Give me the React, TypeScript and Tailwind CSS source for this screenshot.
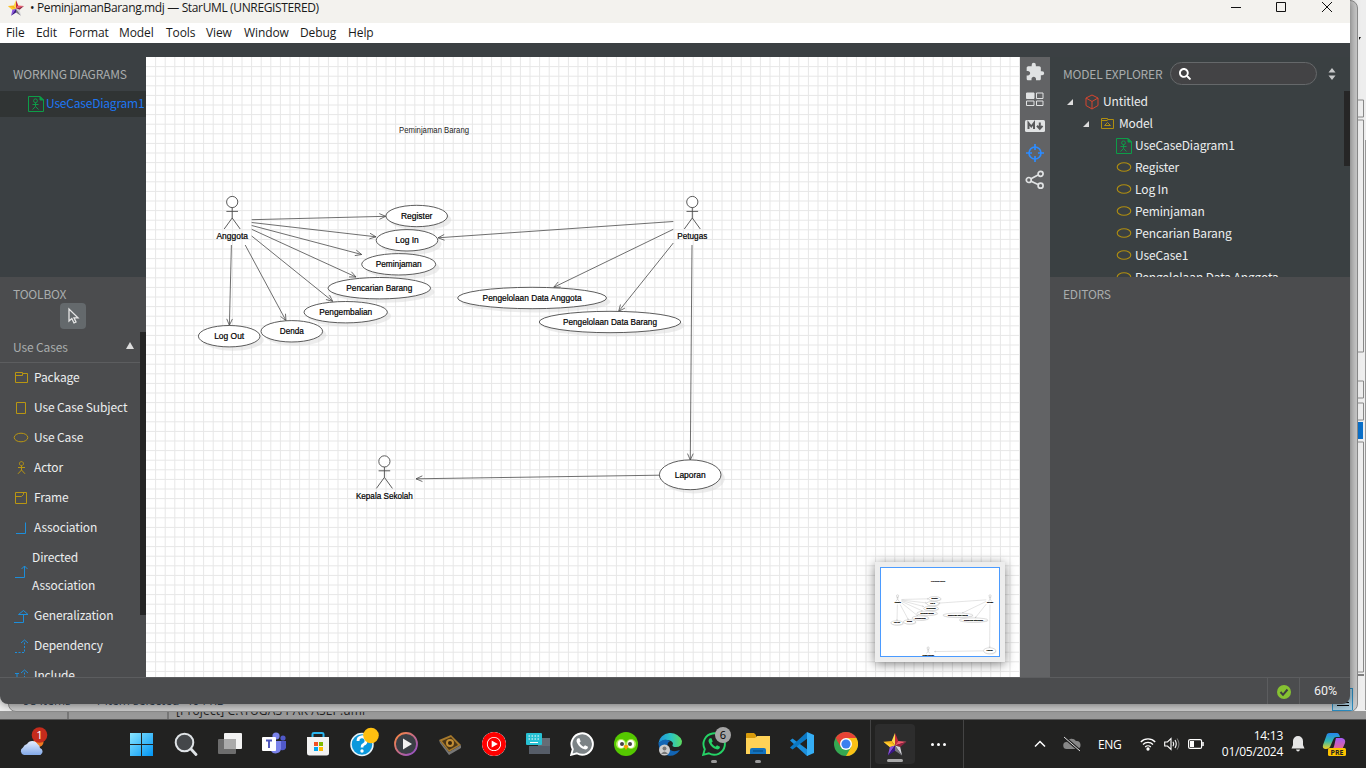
import React from 'react';
import { FaSearch } from 'react-icons/fa';
import { MdExtension } from 'react-icons/md';
import { SiYoutubemusic } from 'react-icons/si';

const SANS = "font-['Noto_Sans_CJK_SC',sans-serif]";
const UI = "font-['Open_Sans','Noto_Sans',sans-serif]";

const ellipses: [string, number, number, number, number, number][] = [
  ['Register', 416.7, 216, 30.8, 10.7, 31.5],
  ['Log In', 407, 240.3, 30.8, 10.7, 23.5],
  ['Peminjaman', 398.7, 264.3, 37, 10.7, 46],
  ['Pencarian Barang', 379.3, 288.2, 51.3, 10.7, 66],
  ['Pengembalian', 345.7, 312.2, 41.7, 10.7, 53],
  ['Denda', 291.8, 331.3, 30.8, 10.7, 24],
  ['Log Out', 229.2, 336.2, 30.8, 10.7, 30],
  ['Pengelolaan Data Anggota', 532.1, 298, 74.5, 10.7, 99],
  ['Pengelolaan Data Barang', 610, 322, 70.8, 10.7, 94],
  ['Laporan', 690.2, 474.8, 30.8, 14.9, 31],
];

const edges = [
  [251.7, 219.7, 385.7, 216.3],
  [251.7, 222.5, 376, 236.8],
  [251.7, 225.5, 361.7, 254.5],
  [251.7, 229.3, 356, 277],
  [251.7, 236, 332.7, 301.3],
  [245.2, 245, 286, 320.7],
  [231.4, 245, 229.4, 325.3],
  [673.3, 221.5, 438, 237.8],
  [673.3, 229.3, 553.7, 287.3],
  [673.3, 243, 618.7, 311.3],
  [692, 245, 690.3, 460],
  [659.4, 475.2, 416, 478.8],
];

const actors: [string, number, number, number][] = [
  ['Anggota', 232.2, 202, 31.5],
  ['Petugas', 692.3, 202, 30],
  ['Kepala Sekolah', 384.4, 461.4, 57],
];

function Edge({ p }: { p: number[] }) {
  const [x1, y1, x2, y2] = p;
  const a = Math.atan2(y2 - y1, x2 - x1);
  const w = (d: number) => `${x2 - 7 * Math.cos(a + d)} ${y2 - 7 * Math.sin(a + d)}`;
  return <path d={`M${x1} ${y1}L${x2} ${y2}M${w(0.42)}L${x2} ${y2}L${w(-0.42)}`} />;
}

function Diagram({ mini = false }: { mini?: boolean }) {
  return (
    <g fontFamily="'Liberation Sans', sans-serif" fontSize="8.3" textAnchor="middle">
      <text x="434" y="133" textLength="70" lengthAdjust="spacingAndGlyphs" fill="#222" stroke={mini ? '#333' : 'none'} strokeWidth={mini ? 0.8 : 0}>
        Peminjaman Barang
      </text>
      <g fill="none" stroke={mini ? '#aaa' : '#4a4a4a'} strokeWidth={mini ? 1.6 : 0.8}>
        {edges.map((p, i) => <Edge key={i} p={p} />)}
      </g>
      {ellipses.map(([n, cx, cy, rx, ry, w]) => (
        <g key={n}>
          <ellipse cx={cx + 3.8} cy={cy + 3.8} rx={rx} ry={ry} fill="#d8d8d8" fillOpacity="0.45" />
          <ellipse cx={cx} cy={cy} rx={rx} ry={ry} fill="#fff" stroke={mini ? '#aaa' : '#4a4a4a'} strokeWidth={mini ? 2 : 0.9} />
          <text x={cx} y={cy + 2.9} textLength={w} lengthAdjust="spacingAndGlyphs" fill="#000" stroke="#000" strokeWidth={mini ? 0.8 : 0.2}>{n}</text>
        </g>
      ))}
      {actors.map(([n, x, y, w]) => (
        <g key={n}>
          <circle cx={x} cy={y} r="5.6" fill="#fff" stroke={mini ? '#aaa' : '#4a4a4a'} strokeWidth={mini ? 2 : 0.9} />
          <path d={`M${x} ${y + 5.6}V${y + 16}M${x - 5.8} ${y + 9.4}H${x + 5.8}M${x - 8} ${y + 27}L${x} ${y + 16}L${x + 8} ${y + 27}`} fill="none" stroke={mini ? '#aaa' : '#4a4a4a'} strokeWidth={mini ? 2 : 0.9} />
          <text x={x} y={y + 37.3} textLength={w} lengthAdjust="spacingAndGlyphs" fill="#000" stroke="#000" strokeWidth={mini ? 0.8 : 0.2}>{n}</text>
        </g>
      ))}
    </g>
  );
}

function GridLines() {
  let d = '';
  for (let i = 1; i <= 91; i++) d += `M${146 + i * 9.6} 57V677`;
  for (let i = 1; i <= 64; i++) d += `M146 ${57 + i * 9.6}H1020`;
  return <path d={d} stroke="#e7e7e7" strokeWidth="1" fill="none" />;
}

function StarIcon({ className }: { className: string }) {
  return (
    <svg viewBox="0 0 24 24" className={className}>
      <path d="M12 0L8.6 8.4L12 13Z" fill="#ffd84a" />
      <path d="M12 0L15.4 8.4L12 13Z" fill="#c32a3c" />
      <path d="M0 9L8.6 8.4L12 13L6.6 14.6Z" fill="#f9b418" />
      <path d="M0 9L6.6 14.6L12 13Z" fill="#ffcf33" />
      <path d="M24 9L15.4 8.4L12 13Z" fill="#f0566c" />
      <path d="M24 9L17.4 14.6L12 13Z" fill="#8e2440" />
      <path d="M4.6 23.5L6.6 14.6L12 13Z" fill="#8a4fe0" />
      <path d="M4.6 23.5L12 18.6V13Z" fill="#3a1688" />
      <path d="M19.4 23.5L17.4 14.6L12 13Z" fill="#d5d5dc" />
      <path d="M19.4 23.5L12 18.6V13Z" fill="#77767f" />
    </svg>
  );
}

function UseCaseDiagramIcon() {
  return (
    <svg viewBox="0 0 16 16" className="h-4 w-4 shrink-0" fill="none" stroke="#0d9d48">
      <path d="M.5 .5H12L15.5 4V15.5H.5Z" />
      <path d="M12 .5V4H15.5Z" fill="#0d9d48" />
      <circle cx="7.5" cy="4.8" r="1.9" />
      <path d="M7.5 6.7V10.5M4.5 8.5H10.5M4.5 13.5L7.5 10.5L10.5 13.5" />
    </svg>
  );
}

function OvalIcon() {
  return (
    <svg viewBox="0 0 16 16" className="h-4 w-4 shrink-0 overflow-visible">
      <ellipse cx="8" cy="8" rx="6.8" ry="4.3" fill="none" stroke="#b08e10" strokeWidth="1.1" />
    </svg>
  );
}

const toolPaths: Record<string, React.ReactNode> = {
  Package: <path d="M1.5 3.5V12.5H13.5V3.5H8.5V2.500H1.5V5.500H8.500V3.500" />,
  'Use Case Subject': <path d="M2.5 2.5H11.5V13.5H2.5Z" />,
  'Use Case': <ellipse cx="7" cy="7.500" rx="6.8" ry="4.3" />,
  Actor: <path d="M7.500 1.6A2 2 0 1 1 7.4 1.6ZM7.500 5.6V10M4 7.5H11M4 13.8L7.500 10L11 13.8" />,
  Frame: <path d="M1.5 2.5H12.5V13.5H1.5ZM1.5 6.5H7.500L9.5 4.5V2.5" />,
  Association: <path d="M2 13.5H11.5V2.5" />,
  'Directed Association': <path d="M1 13.5H10.5V2M7.5 5L10.5 2L13.5 5" />,
  Generalization: <path d="M0 14.5H9.5V6.5M4.5 6.5H14L9.5 2.5Z" />,
  Dependency: <><path strokeDasharray="2 1.5" d="M1 14.5H10.5V3" /><path d="M7 5L10.500 2L14 5" /></>,
  Include: <><path strokeDasharray="2 1.5" d="M1 14.5H10.5V3" /><path d="M1 5.5H5M3 5.5V10M7 5L10.500 2L14 5" /></>,
};

function ToolRow({ name }: { name: string }) {
  const directed = name === 'Directed Association';
  const blue = ['Association', 'Directed Association', 'Generalization', 'Dependency', 'Include'].includes(name);
  return (
    <div className={`flex shrink-0 items-center pl-3.5 ${directed ? 'h-[58px]' : 'h-[30px]'}`}>
      <svg viewBox="0 0 16 16" className="h-4 w-4 shrink-0 overflow-visible" fill="none" stroke={blue ? '#1c8edb' : '#b99612'}>
        {toolPaths[name]}
      </svg>
      <span className={directed ? '-mt-0.5 ml-0.5 w-20 leading-7' : '-mt-0.5 ml-1 whitespace-nowrap leading-7'}>{name}</span>
    </div>
  );
}

function Sidebar() {
  return (
    <div className={`flex w-[146px] flex-col overflow-hidden text-[12px] tracking-[-0.12px] text-[#eceeef] ${SANS}`}>
      <div className="flex h-[220px] shrink-0 flex-col bg-[#3b4043] pt-1.5">
        <div className="h-7 whitespace-nowrap pl-[13px] tracking-[-0.2px] leading-[22px] text-[#a9acad]">WORKING DIAGRAMS</div>
        <div className="flex h-[26px] items-center bg-[#303434] pl-7 text-[#1d76f2]">
          <UseCaseDiagramIcon />
          <span className="-mt-0.5 ml-0.5 tracking-[-0.2px]">UseCaseDiagram1</span>
        </div>
      </div>
      <div className="flex min-h-0 flex-1 flex-col bg-[#4b4c4e]">
        <div className="h-[26px] shrink-0 pl-[13px] pt-1.5 tracking-[-0.2px] leading-[22px] text-[#a9acad]">TOOLBOX</div>
        <div className="flex h-[29px] shrink-0 justify-center">
          <div className="flex h-[26px] w-[26px] items-center justify-center rounded bg-[#64696c]">
            <svg viewBox="0 0 14 18" className="h-[18px] w-[14px]" fill="none" stroke="#e6e6e6" strokeWidth="1.3">
              <path d="M3 2V14L5.8 11.5L8 16L10 15L8 10.8H12Z" />
            </svg>
          </div>
        </div>
        <div className="flex min-h-0 flex-1">
          <div className="flex w-[140px] flex-col overflow-hidden">
            <div className="flex h-[31px] shrink-0 items-center justify-between border-b border-[#5c5d5f] pl-[13px] pr-1.5 text-[#a9acad]">
              <span>Use Cases</span>
              <svg viewBox="0 0 8 7" className="mb-1 h-[7px] w-2"><path d="M4 0L8 7H0Z" fill="#ddd" /></svg>
            </div>
            {Object.keys(toolPaths).map((n) => <ToolRow key={n} name={n} />)}
          </div>
          <div className="h-[283px] w-1.5 bg-[#262626]" />
        </div>
      </div>
    </div>
  );
}

function ToolStrip() {
  return (
    <div className="flex w-[30px] flex-col items-center gap-[7px] bg-[#626365] pt-[5px] text-[#e0e2e3]">
      <MdExtension className="h-5 w-5" />
      <svg viewBox="0 0 18 20" className="h-5 w-[18px]" fill="none" stroke="#e0e2e3">
        <path d="M.5 4H8V9.5H.5Z" fill="#e0e2e3" />
        <path d="M10.5 4H17V9.5H10.5ZM.5 12H8V16.5H.5ZM10.5 12H17V16.5H10.5Z" />
      </svg>
      <svg viewBox="0 0 20 20" className="h-5 w-5">
        <rect x="0" y="4" width="20" height="12" rx="1.5" fill="#e0e2e3" />
        <path d="M3.5 13V7L6.3 10.5L9 7V13M14.8 6.5V12M12 9.8L14.8 12.8L17.5 9.8" fill="none" stroke="#58595b" strokeWidth="2" />
      </svg>
      <svg viewBox="0 0 20 20" className="h-5 w-5" fill="none" stroke="#2d8cff" strokeWidth="1.7">
        <circle cx="10" cy="10" r="6" />
        <path d="M10 1V7M10 13V19M1 10H7M13 10H19" />
      </svg>
      <svg viewBox="0 0 20 20" className="h-5 w-5" fill="none" stroke="#e0e2e3" strokeWidth="1.7">
        <path d="M5.5 9L13 5M5.5 11L13 14.5" />
        <circle cx="3.8" cy="10" r="2.500" /><circle cx="15.6" cy="3.8" r="2.500" /><circle cx="15.600" cy="15.7" r="2.500" />
      </svg>
    </div>
  );
}

function TreeArrow() {
  return <svg viewBox="0 0 6 6" className="mt-0.5 h-1.5 w-1.5 shrink-0"><path d="M6 0V6H0Z" fill="#ddd" /></svg>;
}

function RightPanel() {
  const cases = ['Register', 'Log In', 'Peminjaman', 'Pencarian Barang', 'UseCase1', 'Pengelolaan Data Anggota'];
  return (
    <div className={`flex w-[300px] flex-col text-[12px] tracking-[-0.12px] text-[#eceeef] ${SANS}`}>
      <div className="flex h-[220px] shrink-0 flex-col overflow-hidden bg-[#3a4042]">
        <div className="flex h-[33px] shrink-0 items-center pl-[13px] text-[#a9acad]">
          <span className="w-[107px] whitespace-nowrap tracking-[-0.2px]">MODEL EXPLORER</span>
          <div className="flex h-[23px] w-[147px] items-center rounded-full border border-[#65686a] bg-[#434345] pl-2">
            <FaSearch className="h-3 w-3 text-white" />
          </div>
          <svg viewBox="0 0 8 12" className="ml-[11px] h-3 w-2"><path d="M4 0L7.5 4.5H.5ZM4 12L7.5 7.5H.5Z" fill="#c8cacb" /></svg>
        </div>
        <div className="flex min-h-0 flex-1 justify-between">
          <div className="flex flex-col whitespace-nowrap">
            <div className="flex h-[22px] shrink-0 items-center pl-[17px]">
              <TreeArrow />
              <svg viewBox="0 0 16 16" className="ml-[11px] mt-0.5 h-4 w-4" fill="none" stroke="#d6452f"><path d="M8 1L14 4V11.5L8 15L2 11.5V4ZM2 4L8 7.5L14 4M8 7.5V15" /></svg>
              <span className="ml-[3px]">Untitled</span>
            </div>
            <div className="flex h-[22px] shrink-0 items-center pl-[33px]">
              <TreeArrow />
              <svg viewBox="0 0 16 16" className="ml-[11px] mt-0.5 h-4 w-4" fill="none" stroke="#b08e10"><path d="M1.5 3V12.5H13.5V3.5H7.5V2.5H1.5V4.5H7.500M4.5 9.5H10.5L7.500 6.500Z" /></svg>
              <span className="ml-[3px]">Model</span>
            </div>
            <div className="flex h-[22px] shrink-0 items-center pl-[66px] [&>svg]:mt-0.5">
              <UseCaseDiagramIcon />
              <span className="ml-[3px]">UseCaseDiagram1</span>
            </div>
            {cases.map((c) => (
              <div key={c} className="flex h-[22px] shrink-0 items-center pl-[66px]">
                <OvalIcon />
                <span className="ml-[3px]">{c}</span>
              </div>
            ))}
          </div>
          <div className="mt-px h-[75px] w-1.5 bg-[#262626]" />
        </div>
      </div>
      <div className="flex-1 bg-[#4b4c4e] pl-[13px] pt-1.5 tracking-[-0.2px] leading-[22px] text-[#a9acad]">EDITORS</div>
    </div>
  );
}

function Canvas() {
  return (
    <div className="relative h-[620px] w-[874px] overflow-hidden bg-white">
      <svg viewBox="146 57 874 620" className="h-full w-full">
        <GridLines />
        <Diagram />
      </svg>
      <div className="absolute bottom-[15px] right-[15px] h-[100px] w-[130px] bg-[#ededed] p-[5px] shadow-[0_2px_10px_rgba(0,0,0,0.5)]">
        <div className="h-[90px] w-[120px] border border-[#4b9bff] bg-white">
          <svg viewBox="149.8 63.500 587 437" className="h-full w-full"><Diagram mini /></svg>
        </div>
      </div>
    </div>
  );
}

const menu: [string, string][] = [
  ['File', 'w-[30px]'], ['Edit', 'w-[33px]'], ['Format', 'w-[50px]'], ['Model', 'w-[47px]'], ['Tools', 'w-[40px]'],
  ['View', 'w-[38px]'], ['Window', 'w-[56px]'], ['Debug', 'w-[48px]'], ['Help', 'w-[40px]'],
];

function MainWindow() {
  return (
    <div className="absolute left-0 top-0 flex h-[704px] w-[1350px] flex-col overflow-hidden rounded-b-lg bg-[#4b4c4e] shadow-[0_0_10px_rgba(0,0,0,0.5)]">
      <div className={`flex h-[23px] shrink-0 items-start justify-between bg-[#f3f2ee] text-[12px] text-[#1a1a1a] ${UI}`}>
        <div className="flex h-4 items-center pl-2">
          <StarIcon className="h-4 w-4" />
          <span className="ml-1.5 whitespace-nowrap tracking-[-0.36px]">•&nbsp;PeminjamanBarang.mdj — StarUML (UNREGISTERED)</span>
        </div>
        <svg viewBox="0 0 120 16" className="h-4 w-[120px]" fill="none" stroke="#111" strokeWidth="1">
          <path d="M1 7.5H11M46.500 2.5H55.500V11.500H46.500ZM92 2L102 12M102 2L92 12" />
        </svg>
      </div>
      <div className={`flex h-5 shrink-0 items-center bg-white pl-1.5 text-[12px] tracking-[-0.1px] text-[#1a1a1a] ${UI}`}>
        {menu.map(([m, w]) => <span key={m} className={w}>{m}</span>)}
      </div>
      <div className="h-3.5 shrink-0 bg-[#3b4043]" />
      <div className="flex h-[620px] shrink-0">
        <Sidebar />
        <Canvas />
        <ToolStrip />
        <RightPanel />
      </div>
      <div className="flex h-[27px] shrink-0 justify-end border-t border-[#5c5d5f]">
        <div className="flex w-8 items-center justify-center border-l border-[#5c5d5f]">
          <svg viewBox="0 0 14 14" className="mt-0.5 h-3.5 w-3.5"><circle cx="7" cy="7" r="7" fill="#86c232" /><path d="M3.500 7L6 9.800L10.500 4.500" fill="none" stroke="#3e3f40" strokeWidth="2" /></svg>
        </div>
        <div className="flex w-[51px] items-center justify-center border-l border-[#5c5d5f] pl-px font-['Roboto',sans-serif] text-[12.5px] text-[#f0f0f0]">60%</div>
      </div>
    </div>
  );
}

function Backdrop() {
  return (
    <div className="flex h-full bg-[#eeeeee]">
      <div className={`absolute bottom-0 left-0 flex h-[9px] w-[1366px] items-end border-b border-[#555] bg-[#999] text-[12px] text-[#222] ${UI}`}>
        <div className="h-full w-[69px] border-r-2 border-[#777]" />
        <div className="h-full w-[100px] border-r-2 border-[#777]" />
        <div className="flex h-4 w-[400px] pl-[7px] leading-4 tracking-[0.15px]">[Project] C:\TUGAS PAK ASEP.uml</div>
      </div>
      <svg viewBox="0 0 16 720" className="absolute right-0 top-0 h-[720px] w-4">
        <path d="M8 100H13.500V117H8M8 120H13.500V352H8M8 381H13.500V398H8M8 403H13.500V420H8M8 442H13.500V672H8" fill="none" stroke="#888" />
        <rect x="8" y="422" width="5" height="17" fill="#0a6fc8" />
        <path d="M9 37H11L9 40Z" fill="#111" />
        <path d="M8 675H14" stroke="#111" />
        <path d="M15.500 140V710" stroke="#999" />
      </svg>
      <div className={`absolute left-2 top-0 flex h-[712px] w-[1350px] items-end justify-between overflow-hidden rounded-lg border border-[#8b8b8b] bg-[#c9c9c9] text-[12px] text-[#345] ${UI}`}>
        <div className="flex h-[20px] gap-6 pl-3.5 leading-[20px]"><span>98 items</span><span>1 item selected&nbsp; 404 KB</span></div>
        <div className="mr-1 flex h-[23px] w-[21px] items-end justify-center border border-[#2b8cc0] bg-[#a9cbdc] pb-1"><div className="h-1 w-3 border-y border-black" /></div>
      </div>
    </div>
  );
}

function WhatsApp({ green = false }: { green?: boolean }) {
  return (
    <svg viewBox="0 0 24 24" className="h-6 w-6">
      <path d="M1.200 22.800L2.800 17.200A10.700 10.700 0 1 1 6.800 21.300Z" fill={green ? '#222' : '#7c8386'} stroke={green ? '#25d366' : '#fff'} strokeWidth="1.900" />
      <path d="M8 6.200C6.500 7 6 9 7.300 11.300C9 14.500 11.500 16.600 14.500 17.300C16.500 17.700 18 16.500 18 14.700L15 13.200L13.600 14.700C11.800 14 10.300 12.500 9.500 10.800L10.700 9.400L9.500 6.300Z" fill={green ? '#25d366' : '#fff'} />
    </svg>
  );
}

const taskIcons: React.ReactNode[] = [
  <svg viewBox="0 0 24 24" className="h-6 w-6"><defs><linearGradient id="win" x2="1" y2="1"><stop stopColor="#8ae6ff" /><stop offset="1" stopColor="#0095f5" /></linearGradient></defs><path d="M0 1H11V12H0ZM12 1H23V12H12ZM0 13H11V24H0ZM12 13H23V24H12Z" fill="url(#win)" /></svg>,
  <svg viewBox="0 0 24 24" className="h-6 w-6"><circle cx="10.500" cy="10.500" r="8.800" fill="#44474a" stroke="#dfe3e6" strokeWidth="2" /><path d="M17 17L22 22.500" stroke="#dfe3e6" strokeWidth="2.800" strokeLinecap="round" /></svg>,
  <svg viewBox="0 0 24 24" className="h-6 w-6"><rect x="6" y="1" width="18" height="16" rx="1" fill="#f2f2f2" /><rect y="7" width="18" height="15" rx="1" fill="#777" fillOpacity=".88" /><path d="M6 7H18V17H6Z" fill="#aaa" /></svg>,
  <svg viewBox="0 0 24 24" className="h-6 w-6"><circle cx="14" cy="4" r="3.600" fill="#7b83eb" /><circle cx="21" cy="6" r="2.600" fill="#5059c9" /><path d="M9 9H19V17A5.500 5.500 0 0 1 9 19Z" fill="#7b83eb" /><path d="M19 9H24V16A4 4 0 0 1 19 18Z" fill="#5059c9" /><rect x="0" y="5" width="14" height="14" rx="1" fill="#fff" /><path d="M4 8.500H10M7 8.500V16" stroke="#4b53bc" strokeWidth="1.900" /></svg>,
  <svg viewBox="0 0 24 24" className="h-6 w-6"><path d="M6.500 7V2Q6.500 1 8 1H16Q17.500 1 17.500 2V7" fill="none" stroke="#29b6f0" strokeWidth="2" /><path d="M1 5H23V21Q23 23.500 20.500 23.500H3.500Q1 23.500 1 21Z" fill="#f2f2f2" /><path d="M8 10H12V14H8Z" fill="#f25022" /><path d="M13 10H17V14H13Z" fill="#7fba00" /><path d="M8 15H12V19H8Z" fill="#00a4ef" /><path d="M13 15H17V19H13Z" fill="#ffb900" /></svg>,
  <svg viewBox="0 0 24 24" className="h-6 w-6 overflow-visible"><circle cx="12" cy="12.500" r="11" fill="#0a98dc" stroke="#e8f4fa" strokeWidth="1.500" /><path d="M8 9A4 4 0 1 1 13.500 12.500Q12 13.200 12 15.500" fill="none" stroke="#fff" strokeWidth="2.800" /><circle cx="12" cy="19" r="1.700" fill="#fff" /><circle cx="21" cy="3.500" r="7.800" fill="#ffc010" /></svg>,
  <svg viewBox="0 0 24 24" className="h-6 w-6"><defs><linearGradient id="play" x2="1" y2="1"><stop stopColor="#ff8a3c" /><stop offset="1" stopColor="#8c4dd0" /></linearGradient></defs><circle cx="12" cy="12" r="11" fill="#3a3f45" stroke="url(#play)" strokeWidth="1.800" /><path d="M9 6.500L18 12L9 17.500Z" fill="#f2f2f2" /></svg>,
  <svg viewBox="0 0 24 24" className="h-6 w-6"><path d="M1 8L13 3L23 13L11 20Z" fill="#a77a2c" /><path d="M1 8L11 20L23 13V16L11 23L2 11Z" fill="#777" /><path d="M4 9L13 5L20 13L11 18Z" fill="#4b3719" /><circle cx="12" cy="11" r="4" fill="#c28e35" /><circle cx="12" cy="11" r="2" fill="#33230e" /></svg>,
  <SiYoutubemusic className="h-6 w-6 rounded-full bg-white text-[#ff0000]" />,
  <svg viewBox="0 0 24 24" className="h-6 w-6"><rect x="12" y="6" width="12" height="16" fill="#666c75" /><path d="M3 14H24V22H3Z" fill="#565d68" /><rect y="1" width="16" height="12" rx="1" fill="#27c1d3" /><path d="M2.500 4H14M2.500 7H14" stroke="#fff" strokeDasharray="1.500 1.500" /><path d="M4 10.500H12" stroke="#fff" /></svg>,
  <WhatsApp />,
  <svg viewBox="0 0 24 24" className="h-6 w-6"><circle cx="12" cy="12" r="12" fill="#55c800" /><circle cx="7" cy="12" r="5" fill="#b6eb5a" /><circle cx="17" cy="12" r="5" fill="#b6eb5a" /><ellipse cx="7.200" cy="12" rx="3.500" ry="4" fill="#fff" /><ellipse cx="16.800" cy="12" rx="3.500" ry="4" fill="#fff" /><circle cx="8" cy="12" r="2" fill="#444" /><circle cx="16" cy="12" r="2" fill="#444" /><path d="M9.500 14Q12 12 14.500 14L12 18Z" fill="#ff9d00" /></svg>,
  <svg viewBox="0 0 24 24" className="h-6 w-6"><defs><linearGradient id="edge"><stop stopColor="#1f91dd" /><stop offset=".55" stopColor="#2cc5c0" /><stop offset="1" stopColor="#5edb5b" /></linearGradient></defs><path d="M0.500 11A12 11 0 0 1 24 9Q24 15 18 15Q14 15 14.500 13Q16 11 13 9Q7 6 .500 11Z" fill="url(#edge)" /><path d="M.500 11Q6 5 12 9Q8 11 10 16Q14 21 22 18Q17 25 10 23.500A12 12 0 0 1 .500 11Z" fill="#1265b5" /><circle cx="6.500" cy="18" r="5.500" fill="#ccc" /><circle cx="6.500" cy="16.500" r="2" fill="#777" /><path d="M3 22Q6.500 17 10 22Z" fill="#777" /></svg>,
  <div className="relative"><WhatsApp green /><span className="absolute -right-[5px] -top-[5px] flex h-4 w-4 items-center justify-center rounded-full bg-[#a5a5a5] text-[11px] text-black">6</span></div>,
  <svg viewBox="0 0 24 24" className="h-6 w-6"><path d="M0 2Q0 1 1 1H8L10 3V8H0Z" fill="#d89b0b" /><path d="M0 6H9L11 4H24V22H0Z" fill="#ffd257" /><path d="M4 22V18Q4 16 6 16H18Q20 16 20 18V22Z" fill="#1272bf" /><path d="M7 19H17" stroke="#0a548f" strokeWidth="1.500" /></svg>,
  <svg viewBox="0 0 24 24" className="h-6 w-6"><path d="M0 8.500L2.500 6.500L18 18V23.500L17 24Z" fill="#1c8fdc" /><path d="M17 0L0 15.500L2.500 17.500L18 6Z" fill="#0b78c4" /><path d="M17 0L24 3V21L17 24Z" fill="#35aef5" /></svg>,
  <svg viewBox="0 0 24 24" className="h-6 w-6"><circle cx="12" cy="12" r="12" fill="#35a852" /><path d="M12 12L1.600 6A12 12 0 0 1 22.400 6L12 6Z" fill="#e84335" /><path d="M12 6H22.400A12 12 0 0 1 12 24L17.200 15Z" fill="#fbc116" /><path d="M1.600 6L6.800 15L12 12Z" fill="#e84335" /><circle cx="12" cy="12" r="6" fill="#fff" /><circle cx="12" cy="12" r="4.600" fill="#3b7ff0" /></svg>,
];

function Taskbar() {
  return (
    <div className={`flex h-12 shrink-0 bg-[#222221] text-white ${UI}`}>
      <div className="flex w-[120px] items-center pl-5">
        <svg viewBox="0 0 28 30" className="-mt-1 h-[30px] w-7">
          <defs><linearGradient id="cloud" x2="0" y2="1"><stop stopColor="#e6efff" /><stop offset="1" stopColor="#82a9e8" /></linearGradient></defs>
          <circle cx="18.500" cy="15" r="5" fill="#ed7a20" />
          <path d="M4 28A4 4 0 0 1 3 20.500A6 6 0 0 1 7 17A6 6 0 0 1 17.500 17A5 5 0 0 1 20 21A3.800 3.800 0 0 1 20.500 28Z" fill="url(#cloud)" />
          <circle cx="19.500" cy="8" r="7.800" fill="#c42b1c" />
          <text x="19.500" y="12" fontSize="11.500" textAnchor="middle" fill="#fff">1</text>
        </svg>
      </div>
      {taskIcons.map((icon, i) => (
        <div key={i} className="flex w-11 flex-col items-center pt-3">
          {icon}
          {(i === 13 || i === 14) && <div className="mt-1 h-[3px] w-1.5 rounded-full bg-[#9a9a9a]" />}
        </div>
      ))}
      <div className="ml-[2px] flex w-[94px] items-center border-x border-[#444] pl-1">
        <div className="flex h-10 w-10 flex-col items-center rounded bg-[#2d2d2d] pt-[9px]">
          <StarIcon className="h-[23px] w-6" />
          <div className="mt-[3px] h-[3px] w-4 rounded-full bg-[#aaa]" />
        </div>
        <div className="ml-4 flex gap-[3px]"><i className="h-[3px] w-[3px] rounded-full bg-white" /><i className="h-[3px] w-[3px] rounded-full bg-white" /><i className="h-[3px] w-[3px] rounded-full bg-white" /></div>
      </div>
      <div className="flex flex-1 items-center pl-[70px]">
        <svg viewBox="0 0 12 8" className="h-2 w-3" fill="none" stroke="#fff" strokeWidth="1.500"><path d="M1 6.500L6 1.500L11 6.500" /></svg>
        <svg viewBox="0 0 18 16" className="ml-[17px] h-4 w-[18px]"><path d="M4 13A3.500 3.500 0 0 1 3.500 6A5.500 5.500 0 0 1 13 5A4 4 0 0 1 14 13Z" fill="#878787" /><path d="M1 1L17 15" stroke="#222" strokeWidth="3" /><path d="M1 1L17 15" stroke="#ddd" /></svg>
        <span className="ml-[17px] mt-0.5 w-[42px] text-[12px] tracking-[-0.3px]">ENG</span>
        <svg viewBox="0 0 16 14" className="h-3.5 w-4" fill="none" stroke="#fff" strokeWidth="1.300"><path d="M.8 5A10 10 0 0 1 15.200 5M3 7.500A7 7 0 0 1 13 7.500M5.200 10A4 4 0 0 1 10.800 10" /><circle cx="8" cy="12" r="1" fill="#fff" /></svg>
        <svg viewBox="0 0 16 14" className="ml-2 h-3.5 w-4" fill="none" stroke="#fff" strokeWidth="1.100"><path d="M.7 5H3.500L7 1.500V12.500L3.500 9H.7ZM9 4.800Q10.500 7 9 9.200M11 3Q13.500 7 11 11" /><path d="M13 1.500Q17 7 13 12.500" stroke="#777" /></svg>
        <svg viewBox="0 0 16 10" className="ml-2 h-2.5 w-4"><rect x=".6" y=".6" width="13" height="8.800" rx="1.500" fill="none" stroke="#fff" strokeWidth="1.200" /><path d="M2 2H6V8H2Z" fill="#fff" /><path d="M15 3V7" stroke="#fff" strokeWidth="1.500" /></svg>
        <div className="w-[79px] whitespace-nowrap text-right text-[12px] leading-4 tracking-[-0.25px]"><div>14:13</div><div>01/05/2024</div></div>
        <svg viewBox="0 0 14 16" className="ml-2 h-4 w-3.5"><path d="M7 0A5 5 0 0 1 12 5V9L13.500 12.500H.500L2 9V5A5 5 0 0 1 7 0Z" fill="#e5e5e5" /><path d="M5 13.500H9Q8.500 15.500 7 15.500T5 13.500Z" fill="#e5e5e5" /></svg>
        <svg viewBox="0 0 24 24" className="ml-[17px] h-6 w-6">
          <defs><linearGradient id="ca" x2="0" y2="1"><stop stopColor="#2487ee" /><stop offset=".5" stopColor="#31b8b0" /><stop offset="1" stopColor="#f4d11e" /></linearGradient><linearGradient id="cb" x2="0" y2="1"><stop stopColor="#a45af5" /><stop offset="1" stopColor="#ee6688" /></linearGradient></defs>
          <path d="M5 2Q6 1 8 1H15Q17 1 18 5H14Q12 5 11 8L8 15Q7 17 4 17Q0 17 1 13Z" fill="url(#ca)" />
          <path d="M14 6H20Q24 7 23 11L20 18H10Q12 16 13 10Z" fill="url(#cb)" />
          <rect x="6" y="16" width="18" height="8" rx="1.500" fill="#ffc400" />
          <text x="15" y="22.800" fontSize="7" fontWeight="700" textAnchor="middle" fill="#222">PRE</text>
        </svg>
      </div>
    </div>
  );
}

export default function App() {
  return (
    <div className="flex h-[768px] w-[1366px] flex-col overflow-hidden">
      <div className="relative h-[720px] shrink-0 overflow-hidden">
        <Backdrop />
        <MainWindow />
      </div>
      <Taskbar />
    </div>
  );
}
